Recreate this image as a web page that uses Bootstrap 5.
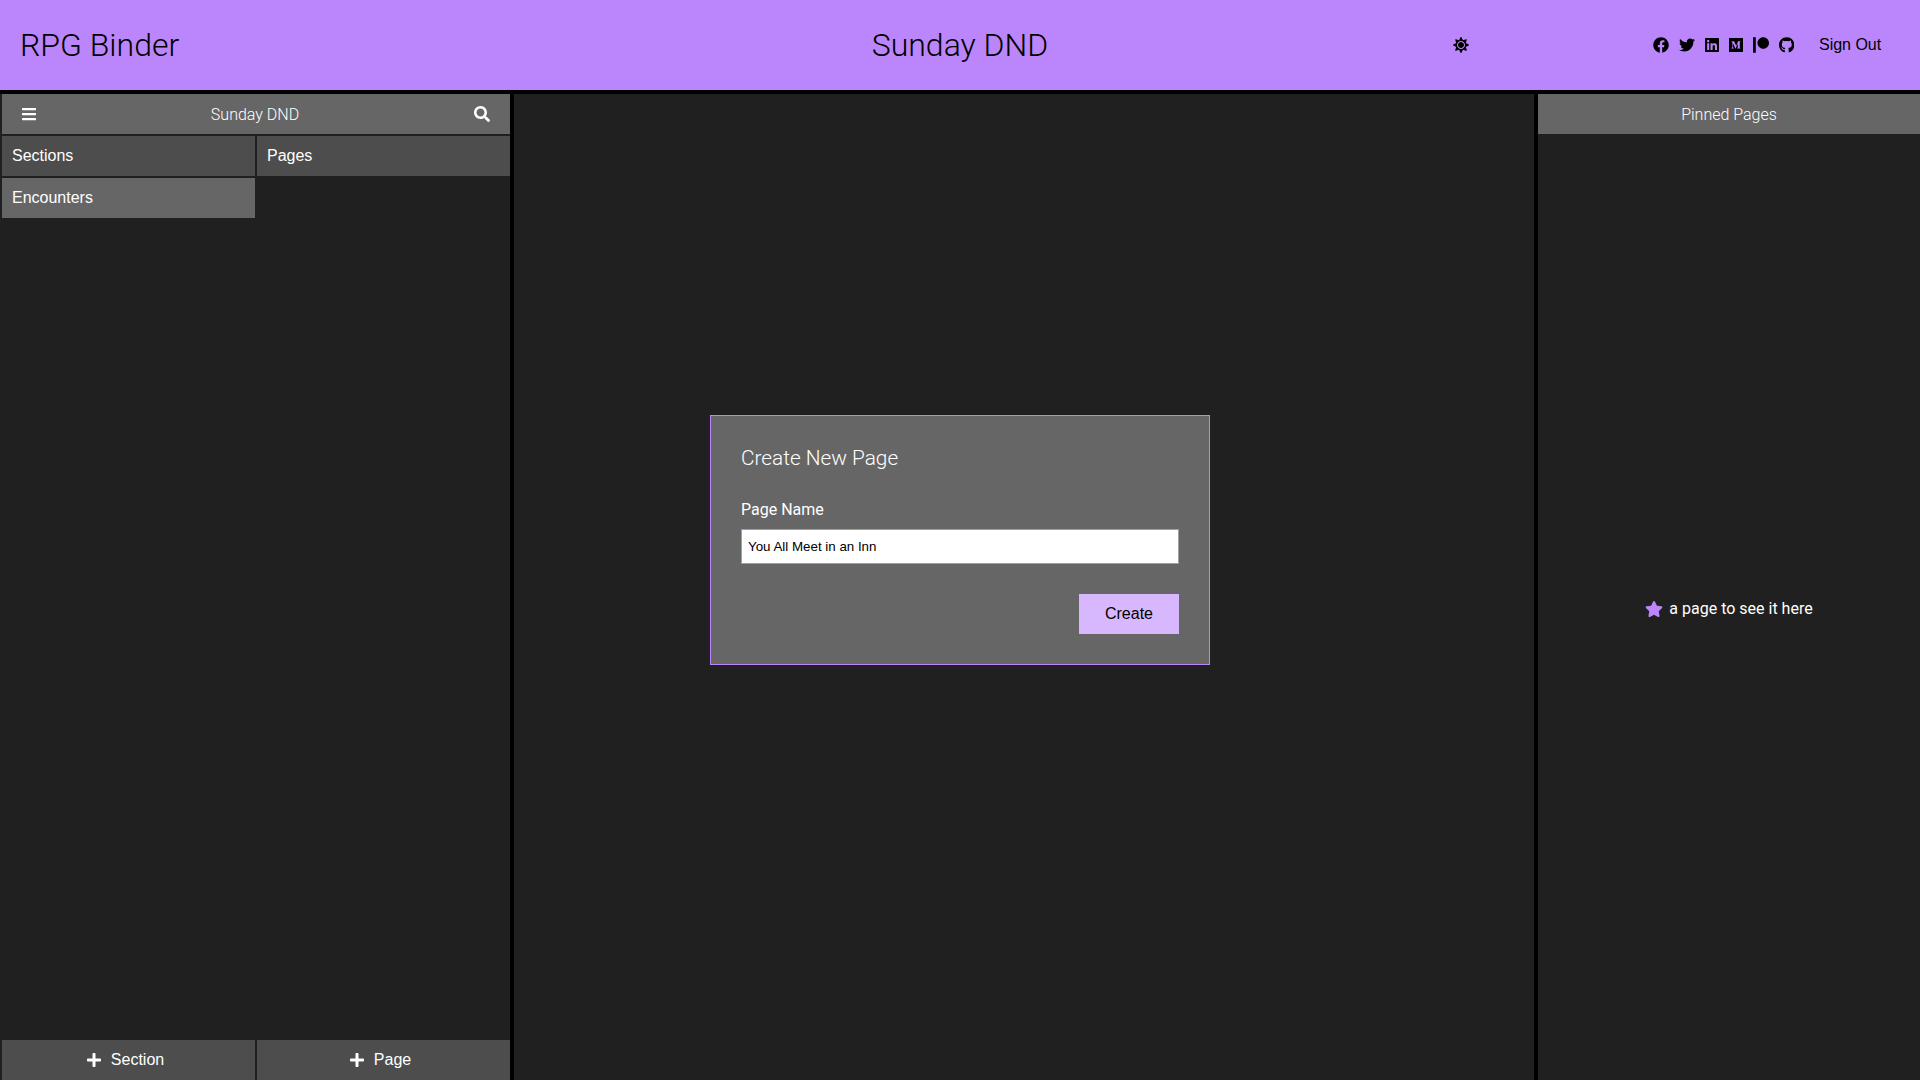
<!DOCTYPE html>
<html lang="en">
<head>
<meta charset="utf-8">
<meta name="viewport" content="width=device-width, initial-scale=1">
<title>RPG Binder</title>
<link href="https://cdn.jsdelivr.net/npm/bootstrap@5.3.0/dist/css/bootstrap.min.css" rel="stylesheet">
<style>
  body { font-family: Roboto, "Liberation Sans", sans-serif; font-size: 16px; line-height: 1.2; background: #000; color: #fff; }
  svg { display: block; height: 16px; fill: currentColor; flex: none; }
  .topbar { height: 90px; background: #bb86fc; color: #000; flex: none; }
  .topbar h1, .topbar h2 { font-size: 32px; font-weight: 300; margin: 0; }
  .topbar h1 { padding-left: 20px; }
  .ui-text { font-family: "Liberation Sans", Arial, sans-serif; }
  .plain-btn { border: 0; background: none; color: inherit; padding: 0; }
  .social { gap: 10px; padding-right: 24.5px; }
  .signout { width: 101px; text-align: left; }
  .theme-slot { width: 183.5px; }
  .workspace { gap: 4px; margin-top: 4px; min-height: 0; }
  .pane { background: #202020; }
  .pane-nav { width: 510px; padding-left: 2px; gap: 2px; flex: none; }
  .pane-pins { width: 382px; flex: none; }
  .bar { height: 40px; background: #666; font-weight: 300; flex: none; }
  .bar span { padding-top: 2px; }
  .cell { height: 40px; background: #4d4d4d; padding: 0 10px; display: flex; align-items: center; flex: none; }
  .cell.active { background: #666; }
  .columns, .stack { gap: 2px; }
  .stack { flex: 1 1 0; }
  .add { border: 0; color: #fff; gap: 10px; padding: 0 16px 0 10px; justify-content: center; }
  .dialog-layer { position: fixed; inset: 0; pointer-events: none; }
  .dialog-box { width: 500px; height: 250px; padding: 30px; background: #666; border: 1px solid #bb86fc; pointer-events: auto; }
  .dialog-box h3 { font-size: 20.8px; font-weight: 300; line-height: 24px; margin: 0 0 30px; }
  .dialog-box label { line-height: 20px; margin-bottom: 9px; }
  .dialog-box .form-control { height: 35px; border: 1px solid #a0a0a0; border-radius: 0; padding: 1px 6px; font-size: 13.3333px; background: #fff; color: #000; }
  .create { width: 100px; height: 40px; border: 0; border-radius: 0; background: #d7b7fd; color: #000; padding: 0; font-size: 16px; margin-top: 30px; }
  .pin-hint { gap: 6px; padding-top: 3px; }
  .star-icon { color: #bb86fc; }
</style>
<script src="https://cdn.jsdelivr.net/npm/bootstrap@5.3.0/dist/js/bootstrap.bundle.min.js"></script>
</head>
<body class="vh-100 d-flex flex-column overflow-hidden">

<header class="topbar d-flex align-items-center">
  <div class="col-4"><h1>RPG Binder</h1></div>
  <div class="col-4 text-center"><h2>Sunday DND</h2></div>
  <div class="col-4 d-flex align-items-center justify-content-end">
    <button class="plain-btn theme-slot me-3" aria-label="Toggle theme">
      <svg width="16" viewBox="0 0 512 512"><path d="M256 160c-52.9 0-96 43.1-96 96s43.1 96 96 96 96-43.1 96-96-43.1-96-96-96zm246.4 80.5l-94.7-47.3 33.5-100.4c4.5-13.6-8.4-26.5-21.9-21.9l-100.4 33.5-47.4-94.8c-6.4-12.8-24.6-12.8-31 0l-47.3 94.7L92.7 70.8c-13.6-4.5-26.5 8.4-21.9 21.9l33.5 100.4-94.7 47.4c-12.8 6.4-12.8 24.6 0 31l94.7 47.3-33.5 100.5c-4.5 13.6 8.4 26.5 21.9 21.9l100.4-33.5 47.3 94.7c6.4 12.8 24.6 12.8 31 0l47.3-94.7 100.4 33.5c13.6 4.5 26.5-8.4 21.9-21.9l-33.5-100.4 94.7-47.3c13-6.5 13-24.7.2-31.1zm-155.9 106c-49.9 49.9-131.1 49.9-181 0-49.9-49.9-49.9-131.1 0-181 49.9-49.9 131.1-49.9 181 0 49.9 49.9 49.9 131.1 0 181z"/></svg>
    </button>
    <div class="social d-flex align-items-center">
      <svg width="16" viewBox="0 0 512 512"><path d="M504 256C504 119 393 8 256 8S8 119 8 256c0 123.78 90.69 226.38 209.25 245V327.69h-63V256h63v-54.64c0-62.15 37-96.48 93.67-96.48 27.14 0 55.52 4.84 55.52 4.84v61h-31.28c-30.8 0-40.41 19.12-40.41 38.73V256h68.78l-11 71.69h-57.78V501C413.31 482.38 504 379.78 504 256z"/></svg>
      <svg width="16" viewBox="0 0 512 512"><path d="M459.37 151.716c.325 4.548.325 9.097.325 13.645 0 138.72-105.583 298.558-298.558 298.558-59.452 0-114.68-17.219-161.137-47.106 8.447.974 16.568 1.299 25.34 1.299 49.055 0 94.213-16.568 130.274-44.832-46.132-.975-84.792-31.188-98.112-72.772 6.498.974 12.995 1.624 19.818 1.624 9.421 0 18.843-1.3 27.614-3.573-48.081-9.747-84.143-51.98-84.143-102.985v-1.299c13.969 7.797 30.214 12.67 47.431 13.319-28.264-18.843-46.781-51.005-46.781-87.391 0-19.492 5.197-37.36 14.294-52.954 51.655 63.675 129.3 105.258 216.365 109.807-1.624-7.797-2.599-15.918-2.599-24.04 0-57.828 46.782-104.934 104.934-104.934 30.213 0 57.502 12.67 76.67 33.137 23.715-4.548 46.456-13.32 66.599-25.34-7.798 24.366-24.366 44.833-46.132 57.827 21.117-2.273 41.584-8.122 60.426-16.243-14.292 20.791-32.161 39.308-52.628 54.253z"/></svg>
      <svg width="14" viewBox="0 0 448 512"><path d="M416 32H31.9C14.3 32 0 46.5 0 64.3v383.4C0 465.5 14.3 480 31.9 480H416c17.6 0 32-14.5 32-32.3V64.3c0-17.8-14.4-32.3-32-32.3zM135.4 416H69V202.2h66.5V416zm-33.2-243c-21.3 0-38.5-17.3-38.5-38.5S80.9 96 102.2 96c21.2 0 38.5 17.3 38.5 38.5 0 21.3-17.2 38.5-38.5 38.5zm282.1 243h-66.4V312c0-24.8-.5-56.7-34.5-56.7-34.6 0-39.9 27-39.9 54.9V416h-66.4V202.2h63.7v29.2h.9c8.9-16.8 30.6-34.5 62.9-34.5 67.2 0 79.7 44.3 79.7 101.9V416z"/></svg>
      <svg width="14" viewBox="0 0 448 512"><path d="M0 32v448h448V32H0zm372.2 106.1l-24 23c-2.1 1.6-3.1 4.2-2.7 6.7v169.3c-.4 2.6.6 5.2 2.7 6.7l23.5 23v5.1h-118V367l24.3-23.6c2.4-2.4 2.4-3.1 2.4-6.7V199.8l-67.6 171.6h-9.1L125 199.8v115c-.7 4.8 1 9.7 4.4 13.2l31.6 38.3v5.1H71.2v-5.1l31.6-38.3c3.4-3.5 4.9-8.4 4.1-13.2v-133c.4-3.7-1-7.3-3.8-9.8L75 138.1V133h87.3l67.4 148L289 133.1h83.2v5z"/></svg>
      <svg width="16" viewBox="0 0 512 512"><path d="M512 194.8c0 101.3-82.4 183.8-183.8 183.8-101.7 0-184.4-82.4-184.4-183.8 0-101.6 82.7-184.3 184.4-184.3C429.6 10.5 512 93.2 512 194.8zM0 501.5h90v-491H0v491z"/></svg>
      <svg width="15.5" viewBox="0 0 496 512"><path d="M244.8 8C106.1 8 0 113.3 0 252c0 110.9 69.8 205.8 169.5 239.2 12.8 2.3 17.3-5.6 17.3-12.1 0-6.2-.3-40.4-.3-61.4 0 0-70 15-84.7-29.8 0 0-11.4-29.1-27.8-36.6 0 0-22.9-15.7 1.6-15.4 0 0 24.9 2 38.6 25.8 21.9 38.6 58.6 27.5 72.9 20.9 2.3-16 8.8-27.1 16-33.7-55.9-6.2-112.3-14.3-112.3-110.5 0-27.5 7.6-41.3 23.6-58.9-2.6-6.5-11.1-33.3 2.6-67.9 20.9-6.5 69 27 69 27 20-5.6 41.5-8.5 62.8-8.5s42.8 2.9 62.8 8.5c0 0 48.1-33.6 69-27 13.7 34.7 5.2 61.4 2.6 67.9 16 17.7 25.8 31.5 25.8 58.9 0 96.5-58.9 104.2-114.8 110.5 9.2 7.9 17 22.9 17 46.4 0 33.7-.3 75.4-.3 83.6 0 6.5 4.6 14.4 17.3 12.1C428.2 457.8 496 362.9 496 252 496 113.3 383.5 8 244.8 8z"/></svg>
    </div>
    <button class="plain-btn ui-text signout">Sign Out</button>
  </div>
</header>

<main class="workspace d-flex flex-grow-1">
  <nav class="pane pane-nav d-flex flex-column">
    <div class="bar d-flex align-items-center justify-content-between px-3">
      <button class="plain-btn ps-1" aria-label="Menu"><svg width="14" viewBox="0 0 448 512"><path d="M16 132h416c8.837 0 16-7.163 16-16V76c0-8.837-7.163-16-16-16H16C7.163 60 0 67.163 0 76v40c0 8.837 7.163 16 16 16zm0 160h416c8.837 0 16-7.163 16-16v-40c0-8.837-7.163-16-16-16H16c-8.837 0-16 7.163-16 16v40c0 8.837 7.163 16 16 16zm0 160h416c8.837 0 16-7.163 16-16v-40c0-8.837-7.163-16-16-16H16c-8.837 0-16 7.163-16 16v40c0 8.837 7.163 16 16 16z"/></svg></button>
      <span>Sunday DND</span>
      <button class="plain-btn pe-1" aria-label="Search"><svg width="16" viewBox="0 0 512 512"><path d="M505 442.7L405.3 343c-4.5-4.5-10.6-7-17-7H372c27.6-35.3 44-79.7 44-128C416 93.1 322.9 0 208 0S0 93.1 0 208s93.1 208 208 208c48.3 0 92.7-16.4 128-44v16.3c0 6.4 2.5 12.5 7 17l99.7 99.7c9.4 9.4 24.6 9.4 33.9 0l28.3-28.3c9.4-9.4 9.4-24.6.1-34zM208 336c-70.7 0-128-57.2-128-128 0-70.7 57.2-128 128-128 70.7 0 128 57.2 128 128 0 70.7-57.2 128-128 128z"/></svg></button>
    </div>
    <div class="columns d-flex flex-grow-1 ui-text">
      <div class="stack d-flex flex-column">
        <div class="cell">Sections</div>
        <div class="cell active">Encounters</div>
        <button class="cell add mt-auto"><svg width="14" viewBox="0 0 448 512"><path d="M416 208H272V64c0-17.67-14.33-32-32-32h-32c-17.67 0-32 14.33-32 32v144H32c-17.67 0-32 14.33-32 32v32c0 17.67 14.33 32 32 32h144v144c0 17.67 14.33 32 32 32h32c17.67 0 32-14.33 32-32V304h144c17.67 0 32-14.33 32-32v-32c0-17.67-14.33-32-32-32z"/></svg>Section</button>
      </div>
      <div class="stack d-flex flex-column">
        <div class="cell">Pages</div>
        <button class="cell add mt-auto"><svg width="14" viewBox="0 0 448 512"><path d="M416 208H272V64c0-17.67-14.33-32-32-32h-32c-17.67 0-32 14.33-32 32v144H32c-17.67 0-32 14.33-32 32v32c0 17.67 14.33 32 32 32h144v144c0 17.67 14.33 32 32 32h32c17.67 0 32-14.33 32-32V304h144c17.67 0 32-14.33 32-32v-32c0-17.67-14.33-32-32-32z"/></svg>Page</button>
      </div>
    </div>
  </nav>

  <section class="pane flex-grow-1"></section>

  <aside class="pane pane-pins d-flex flex-column">
    <div class="bar d-flex align-items-center justify-content-center"><span>Pinned Pages</span></div>
    <div class="pin-hint flex-grow-1 d-flex align-items-center justify-content-center">
      <svg class="star-icon" width="18" viewBox="0 0 576 512"><path d="M259.3 17.8L194 150.2 47.9 171.5c-26.2 3.8-36.7 36.1-17.7 54.6l105.7 103-25 145.5c-4.5 26.3 23.2 46 46.4 33.7L288 439.6l130.7 68.7c23.2 12.2 50.9-7.4 46.4-33.7l-25-145.5 105.7-103c19-18.5 8.5-50.8-17.7-54.6L382 150.2 316.7 17.8c-11.7-23.6-45.6-23.9-57.4 0z"/></svg>
      <span>a page to see it here</span>
    </div>
  </aside>
</main>

<div class="dialog-layer d-flex align-items-center justify-content-center">
  <form class="dialog-box d-flex flex-column" onsubmit="return false">
    <h3>Create New Page</h3>
    <label for="page-name">Page Name</label>
    <input id="page-name" type="text" class="form-control ui-text" value="You All Meet in an Inn">
    <button class="btn create ui-text align-self-end">Create</button>
  </form>
</div>

</body>
</html>
